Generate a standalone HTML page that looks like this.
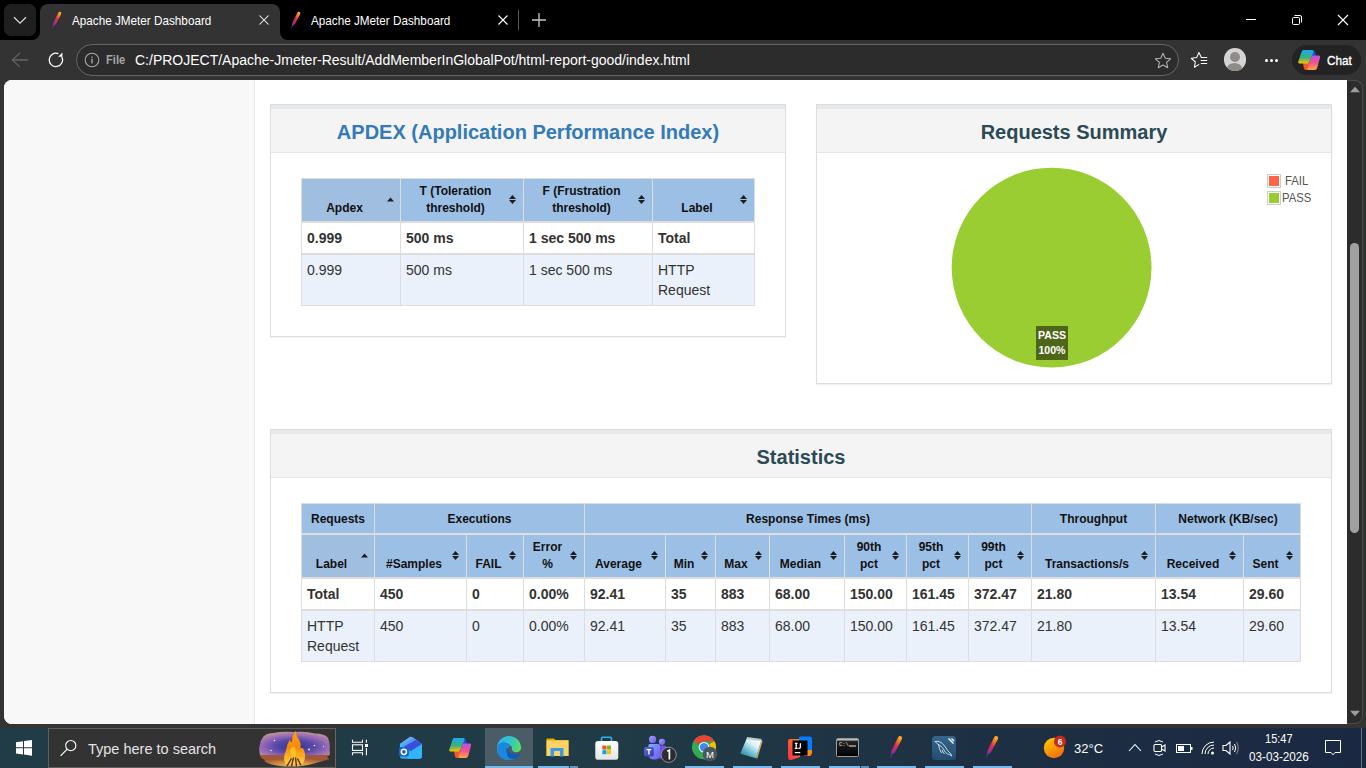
<!DOCTYPE html>
<html><head><meta charset="utf-8"><style>*{margin:0;padding:0;box-sizing:border-box}
html,body{width:1366px;height:768px;overflow:hidden;background:#000;font-family:"Liberation Sans",sans-serif}
.a{position:absolute}
#tabbar{left:0;top:0;width:1366px;height:40px;background:#000}
#toolbar{left:0;top:40px;width:1366px;height:40px;background:#333}
#page{left:4px;top:80px;width:1343px;height:644px;background:#fff;border-radius:8px 0 0 8px}
#taskbar{left:0;top:728px;width:1366px;height:40px;background:linear-gradient(90deg,#213b47 0%,#203a46 45%,#1d2f43 75%,#1b2842 100%)}
.tt{color:#fff;font-size:12px;white-space:nowrap}
.panel{position:absolute;border:1px solid #ddd;background:#fff;box-shadow:0 1px 1px rgba(0,0,0,.05)}
.tbl{position:absolute;background:#ddd}
.c{position:absolute}
.h{background:#9cbfe6}
.hs{background:#a0bedf}
.r1{background:#fff}
.r2{background:#eaf1fa}
.txt{position:absolute;white-space:nowrap}
</style></head><body>
<!-- TAB BAR -->
<div id="tabbar" class="a"></div>
<!-- active tab -->
<div class="a" style="left:40px;top:4px;width:240px;height:40px;background:#333;border-radius:8px 8px 0 0"></div>
<div class="a" style="left:32px;top:32px;width:8px;height:8px;background:#333"></div>
<div class="a" style="left:24px;top:24px;width:16px;height:16px;background:#000;border-radius:0 0 8px 0"></div>
<div class="a" style="left:280px;top:32px;width:8px;height:8px;background:#333"></div>
<div class="a" style="left:280px;top:24px;width:16px;height:16px;background:#000;border-radius:0 0 0 8px"></div>
<svg class="a" style="left:50px;top:11px" width="12" height="18" viewBox="0 0 12 18"><defs><linearGradient id="fg" x1="0.8" y1="0" x2="0.2" y2="1"><stop offset="0" stop-color="#fbb024"/><stop offset="0.2" stop-color="#f47a2a"/><stop offset="0.45" stop-color="#e42a48"/><stop offset="0.72" stop-color="#a62c90"/><stop offset="1" stop-color="#4a3a78"/></linearGradient></defs><path d="M9.3 0.8 Q11.8 0.6 11.2 3 L6.5 12 Q5.5 14 4 14.5 L2.6 17.5 L2.3 17.3 L3 13.5 Q3 12 4 10.5 L8 2.5 Q8.5 1 9.3 0.8Z" fill="url(#fg)"/></svg>
<div class="a" style="left:4px;top:4px;width:32px;height:32px;background:#1f1f1f;border-radius:7px"></div>
<svg class="a" style="left:12px;top:12px" width="16" height="16" viewBox="0 0 16 16"><path d="M2 5.3 L8 11.2 L14 5.3" stroke="#dcdcdc" stroke-width="1.25" fill="none"/></svg>
<div class="a tt" style="left:71.5px;top:13.5px;font-size:12.6px;transform:scaleX(0.93);transform-origin:0 0">Apache JMeter Dashboard</div>
<svg class="a" style="left:259px;top:15px" width="10" height="10" viewBox="0 0 10 10"><path d="M0.5 0.5 L9.5 9.5 M9.5 0.5 L0.5 9.5" stroke="#fff" stroke-width="1.05"/></svg>
<svg class="a" style="left:289px;top:11px" width="12" height="18" viewBox="0 0 12 18"><path d="M9.3 0.8 Q11.8 0.6 11.2 3 L6.5 12 Q5.5 14 4 14.5 L2.6 17.5 L2.3 17.3 L3 13.5 Q3 12 4 10.5 L8 2.5 Q8.5 1 9.3 0.8Z" fill="url(#fg)"/></svg>
<div class="a tt" style="left:310.5px;top:13.5px;font-size:12.6px;transform:scaleX(0.93);transform-origin:0 0">Apache JMeter Dashboard</div>
<svg class="a" style="left:498px;top:15px" width="10" height="10" viewBox="0 0 10 10"><path d="M0.5 0.5 L9.5 9.5 M9.5 0.5 L0.5 9.5" stroke="#fff" stroke-width="1.1"/></svg>
<div class="a" style="left:518px;top:10px;width:1px;height:20px;background:#5a5a5a"></div>
<svg class="a" style="left:531px;top:12px" width="16" height="16" viewBox="0 0 16 16"><path d="M8 1 V15 M1 8 H15" stroke="#c8c8c8" stroke-width="1.3"/></svg>
<!-- window controls -->
<div class="a" style="left:1246px;top:19px;width:10px;height:1px;background:#fff"></div>
<svg class="a" style="left:1291px;top:14px" width="12" height="12" viewBox="0 0 12 12"><rect x="1.5" y="3.5" width="7" height="7" rx="1.2" stroke="#fff" fill="none" stroke-width="1"/><path d="M3.5 1.5 H9 Q10.5 1.5 10.5 3 V8.5" stroke="#fff" fill="none" stroke-width="1"/></svg>
<svg class="a" style="left:1337px;top:14px" width="12" height="12" viewBox="0 0 12 12"><path d="M1 1 L11 11 M11 1 L1 11" stroke="#fff" stroke-width="1.1"/></svg>
<!-- TOOLBAR -->
<div id="toolbar" class="a"></div>
<svg class="a" style="left:11px;top:52px" width="18" height="16" viewBox="0 0 18 16"><path d="M17 7.9 H1.6" stroke="#666" stroke-width="1.5" fill="none"/><path d="M9 1 L1.2 7.9 L9 14.8" stroke="#666" stroke-width="1.1" fill="none"/></svg>
<svg class="a" style="left:47px;top:51px" width="18" height="18" viewBox="0 0 18 18"><path d="M14.87 5.86 A6.7 6.7 0 1 1 11.3 2.65" stroke="#fff" stroke-width="1.3" fill="none"/><path d="M11.2 5.7 L15.4 5.7 L15.4 1.6Z" fill="#fff"/></svg>
<div class="a" style="left:76px;top:44px;width:1103px;height:32px;border:1px solid #676767;border-radius:16px;background:#2c2c2c"></div>
<svg class="a" style="left:84px;top:52px" width="16" height="16" viewBox="0 0 16 16"><circle cx="8" cy="8" r="6.8" stroke="#a8a8a8" stroke-width="1.1" fill="none"/><rect x="7.3" y="6.8" width="1.4" height="4.6" fill="#a8a8a8"/><rect x="7.3" y="4.6" width="1.4" height="1.3" fill="#a8a8a8"/></svg>
<div class="a" style="left:106px;top:52px;color:#a4a4a4;font-size:13px;font-weight:bold;white-space:nowrap;transform:scaleX(0.86);transform-origin:0 0">File</div>
<div class="a" style="left:135px;top:52px;color:#fff;font-size:14px;white-space:nowrap">C:/PROJECT/Apache-Jmeter-Result/AddMemberInGlobalPot/html-report-good/index.html</div>
<svg class="a" style="left:1154px;top:51.5px" width="18" height="18" viewBox="0 0 18 18"><path d="M9 1.3 L11.3 6.2 L16.6 6.8 L12.6 10.4 L13.7 15.7 L9 13 L4.3 15.7 L5.4 10.4 L1.4 6.8 L6.7 6.2 Z" stroke="#b4b4b4" stroke-width="1.05" fill="none" stroke-linejoin="round"/></svg>
<svg class="a" style="left:1190px;top:51px" width="18" height="18" viewBox="0 0 18 18"><path d="M9.2 13.4 L4.3 16.3 L5.4 11 L1.3 7.3 L6.7 6.6 L8.9 1.4 L11.3 6.5 H17.2" stroke="#fff" stroke-width="1.05" fill="none" stroke-linejoin="round"/><path d="M10.8 9.5 H17.2 M10.8 12.5 H17.2" stroke="#fff" stroke-width="1"/></svg>
<div class="a" style="left:1223.6px;top:48.4px;width:22.8px;height:22.8px;border-radius:50%;background:#d6d4d2;overflow:hidden"><div class="a" style="left:6.4px;top:3.6px;width:10px;height:10px;border-radius:50%;background:#8e8b88"></div><div class="a" style="left:3.9px;top:14.7px;width:15px;height:11px;border-radius:50%;background:#8e8b88"></div></div>
<div class="a" style="left:1265px;top:59px;width:3px;height:3px;border-radius:50%;background:#fff"></div>
<div class="a" style="left:1270px;top:59px;width:3px;height:3px;border-radius:50%;background:#fff"></div>
<div class="a" style="left:1275px;top:59px;width:3px;height:3px;border-radius:50%;background:#fff"></div>
<div class="a" style="left:1292px;top:45px;width:69px;height:30px;border-radius:15px;background:#232323"></div>
<svg class="a" style="left:1297px;top:49px" width="25" height="23" viewBox="0 0 25 23"><defs><linearGradient id="cp1" x1="0" y1="0" x2="0" y2="1"><stop offset="0" stop-color="#1aa8f8"/><stop offset="0.55" stop-color="#3cb078"/><stop offset="1" stop-color="#f8c800"/></linearGradient><linearGradient id="cp2" x1="0" y1="0" x2="0" y2="1"><stop offset="0" stop-color="#b850f0"/><stop offset="0.5" stop-color="#f05488"/><stop offset="1" stop-color="#ffa848"/></linearGradient></defs><path d="M13 1 H15.5 Q17.5 1 18.2 3.5 L19 7 H14.5Z" fill="#1a4fd8"/><path d="M6 14 H12 L11.5 21 H9 Q7.3 21 6.8 19Z" fill="#f25a2a"/><path d="M6.5 1 H15 Q17 1 16.5 3 L12.3 13 Q11.6 14.6 9.5 14.6 H3 Q0.8 14.6 1.3 12.5 L4.5 3 Q5 1 6.5 1Z" fill="url(#cp1)"/><path d="M16.3 6.5 H21.5 Q23.6 6.5 23 8.7 L20.2 19 Q19.6 21 17.6 21 H11.8 Q10 21 10.5 19.3 L14 8.5 Q14.6 6.5 16.3 6.5Z" fill="url(#cp2)"/></svg>
<div class="a" style="left:1327px;top:52.5px;color:#fff;font-size:13px;white-space:nowrap;-webkit-text-stroke:0.35px #fff;transform:scaleX(0.9);transform-origin:0 0">Chat</div>

<div class="a" style="left:0;top:80px;width:1366px;height:648px;background:#333"></div>
<div id="page" class="a"></div>
<div class="a" style="left:4px;top:80px;width:250px;height:644px;background:#f8f8f8;border-radius:8px 0 0 8px"></div>
<div class="a" style="left:254px;top:80px;width:1px;height:644px;background:#e7e7e7"></div>
<div class="a" style="left:1347px;top:80px;width:16px;height:644px;background:#2c2c2c;border:1px solid #4a4a4a;border-left:none;border-radius:0 8px 8px 0"></div>
<svg class="a" style="left:1349.5px;top:86px" width="10" height="7" viewBox="0 0 10 7"><path d="M0 6.2 L5 0.8 L10 6.2Z" fill="#9d9d9d"/></svg>
<svg class="a" style="left:1349.5px;top:710px" width="10" height="7" viewBox="0 0 10 7"><path d="M0 0.8 L5 6.2 L10 0.8Z" fill="#9d9d9d"/></svg>
<div class="a" style="left:1350px;top:243px;width:9px;height:290px;border-radius:4.5px;background:#a0a0a0"></div>
<div class="panel" style="left:270px;top:104px;width:516px;height:233px"></div>
<div class="a" style="left:271px;top:105px;width:514px;height:4px;background:#e6e9ec"></div>
<div class="a" style="left:271px;top:109px;width:514px;height:43px;background:#f4f4f4"></div>
<div class="a" style="left:271px;top:152px;width:514px;height:1px;background:#e1e6ec"></div>
<div class="txt" style="left:271px;top:120.57px;font-size:20px;line-height:23px;color:#337ab7;font-weight:bold;width:514px;text-align:center;">APDEX (Application Performance Index)</div>
<div class="panel" style="left:816px;top:104px;width:516px;height:280px"></div>
<div class="a" style="left:817px;top:105px;width:514px;height:4px;background:#e6e9ec"></div>
<div class="a" style="left:817px;top:109px;width:514px;height:43px;background:#f4f4f4"></div>
<div class="a" style="left:817px;top:152px;width:514px;height:1px;background:#e1e6ec"></div>
<div class="txt" style="left:817px;top:120.57px;font-size:20px;line-height:23px;color:#2b4a55;font-weight:bold;width:514px;text-align:center;">Requests Summary</div>
<div class="panel" style="left:270px;top:429px;width:1062px;height:264px"></div>
<div class="a" style="left:271px;top:430px;width:1060px;height:4px;background:#e6e9ec"></div>
<div class="a" style="left:271px;top:434px;width:1060px;height:43px;background:#f4f4f4"></div>
<div class="a" style="left:271px;top:477px;width:1060px;height:1px;background:#e1e6ec"></div>
<div class="txt" style="left:271px;top:445.57px;font-size:20px;line-height:23px;color:#2b4a55;font-weight:bold;width:1060px;text-align:center;">Statistics</div>
<div class="tbl" style="left:301px;top:178px;width:454px;height:128px"></div>
<div class="c h hs" style="left:302px;top:179px;width:98px;height:42px"></div>
<div class="txt" style="left:307px;top:200.84px;font-size:12px;line-height:14px;color:#111;font-weight:bold;width:75px;text-align:center;">Apdex</div>
<svg class="a" style="left:387px;top:197px" width="8" height="5" viewBox="0 0 8 5"><path d="M0 4.5 L3.5 0.5 L7 4.5Z" fill="#1e1e1e"/></svg>
<div class="c h" style="left:401px;top:179px;width:122px;height:42px"></div>
<div class="txt" style="left:406px;top:183.84px;font-size:12px;line-height:14px;color:#111;font-weight:bold;width:99px;text-align:center;">T (Toleration</div>
<div class="txt" style="left:406px;top:200.84px;font-size:12px;line-height:14px;color:#111;font-weight:bold;width:99px;text-align:center;">threshold)</div>
<svg class="a" style="left:509px;top:195px" width="8" height="10" viewBox="0 0 8 10"><path d="M0 4 L3.5 0 L7 4Z M0 5 L7 5 L3.5 9Z" fill="#1e1e1e"/></svg>
<div class="c h" style="left:524px;top:179px;width:128px;height:42px"></div>
<div class="txt" style="left:529px;top:183.84px;font-size:12px;line-height:14px;color:#111;font-weight:bold;width:105px;text-align:center;">F (Frustration</div>
<div class="txt" style="left:529px;top:200.84px;font-size:12px;line-height:14px;color:#111;font-weight:bold;width:105px;text-align:center;">threshold)</div>
<svg class="a" style="left:638px;top:195px" width="8" height="10" viewBox="0 0 8 10"><path d="M0 4 L3.5 0 L7 4Z M0 5 L7 5 L3.5 9Z" fill="#1e1e1e"/></svg>
<div class="c h" style="left:653px;top:179px;width:101px;height:42px"></div>
<div class="txt" style="left:658px;top:200.84px;font-size:12px;line-height:14px;color:#111;font-weight:bold;width:78px;text-align:center;">Label</div>
<svg class="a" style="left:740px;top:195px" width="8" height="10" viewBox="0 0 8 10"><path d="M0 4 L3.5 0 L7 4Z M0 5 L7 5 L3.5 9Z" fill="#1e1e1e"/></svg>
<div class="c r1" style="left:302px;top:223px;width:98px;height:30px"></div>
<div class="txt" style="left:307px;top:230.15px;font-size:14px;line-height:16px;color:#333;font-weight:bold;">0.999</div>
<div class="c r1" style="left:401px;top:223px;width:122px;height:30px"></div>
<div class="txt" style="left:406px;top:230.15px;font-size:14px;line-height:16px;color:#333;font-weight:bold;">500 ms</div>
<div class="c r1" style="left:524px;top:223px;width:128px;height:30px"></div>
<div class="txt" style="left:529px;top:230.15px;font-size:14px;line-height:16px;color:#333;font-weight:bold;">1 sec 500 ms</div>
<div class="c r1" style="left:653px;top:223px;width:101px;height:30px"></div>
<div class="txt" style="left:658px;top:230.15px;font-size:14px;line-height:16px;color:#333;font-weight:bold;">Total</div>
<div class="c r2" style="left:302px;top:255px;width:98px;height:50px"></div>
<div class="txt" style="left:307px;top:262.15px;font-size:14px;line-height:16px;color:#333;">0.999</div>
<div class="c r2" style="left:401px;top:255px;width:122px;height:50px"></div>
<div class="txt" style="left:406px;top:262.15px;font-size:14px;line-height:16px;color:#333;">500 ms</div>
<div class="c r2" style="left:524px;top:255px;width:128px;height:50px"></div>
<div class="txt" style="left:529px;top:262.15px;font-size:14px;line-height:16px;color:#333;">1 sec 500 ms</div>
<div class="c r2" style="left:653px;top:255px;width:101px;height:50px"></div>
<div class="txt" style="left:658px;top:262.15px;font-size:14px;line-height:16px;color:#333;">HTTP</div>
<div class="txt" style="left:658px;top:282.15px;font-size:14px;line-height:16px;color:#333;">Request</div>
<div class="tbl" style="left:301px;top:503px;width:1000px;height:159px"></div>
<div class="c h" style="left:302px;top:504px;width:72px;height:29px"></div>
<div class="txt" style="left:302px;top:511.84px;font-size:12px;line-height:14px;color:#111;font-weight:bold;width:72px;text-align:center;">Requests</div>
<div class="c h" style="left:375px;top:504px;width:209px;height:29px"></div>
<div class="txt" style="left:375px;top:511.84px;font-size:12px;line-height:14px;color:#111;font-weight:bold;width:209px;text-align:center;">Executions</div>
<div class="c h" style="left:585px;top:504px;width:446px;height:29px"></div>
<div class="txt" style="left:585px;top:511.84px;font-size:12px;line-height:14px;color:#111;font-weight:bold;width:446px;text-align:center;">Response Times (ms)</div>
<div class="c h" style="left:1032px;top:504px;width:123px;height:29px"></div>
<div class="txt" style="left:1032px;top:511.84px;font-size:12px;line-height:14px;color:#111;font-weight:bold;width:123px;text-align:center;">Throughput</div>
<div class="c h" style="left:1156px;top:504px;width:144px;height:29px"></div>
<div class="txt" style="left:1156px;top:511.84px;font-size:12px;line-height:14px;color:#111;font-weight:bold;width:144px;text-align:center;">Network (KB/sec)</div>
<div class="c h hs" style="left:302px;top:535px;width:72px;height:42px"></div>
<div class="txt" style="left:307px;top:556.84px;font-size:12px;line-height:14px;color:#111;font-weight:bold;width:49px;text-align:center;">Label</div>
<svg class="a" style="left:361px;top:553px" width="8" height="5" viewBox="0 0 8 5"><path d="M0 4.5 L3.5 0.5 L7 4.5Z" fill="#1e1e1e"/></svg>
<div class="c h" style="left:375px;top:535px;width:91px;height:42px"></div>
<div class="txt" style="left:380px;top:556.84px;font-size:12px;line-height:14px;color:#111;font-weight:bold;width:68px;text-align:center;">#Samples</div>
<svg class="a" style="left:452px;top:551px" width="8" height="10" viewBox="0 0 8 10"><path d="M0 4 L3.5 0 L7 4Z M0 5 L7 5 L3.5 9Z" fill="#1e1e1e"/></svg>
<div class="c h" style="left:467px;top:535px;width:56px;height:42px"></div>
<div class="txt" style="left:472px;top:556.84px;font-size:12px;line-height:14px;color:#111;font-weight:bold;width:33px;text-align:center;">FAIL</div>
<svg class="a" style="left:509px;top:551px" width="8" height="10" viewBox="0 0 8 10"><path d="M0 4 L3.5 0 L7 4Z M0 5 L7 5 L3.5 9Z" fill="#1e1e1e"/></svg>
<div class="c h" style="left:524px;top:535px;width:60px;height:42px"></div>
<div class="txt" style="left:529px;top:539.84px;font-size:12px;line-height:14px;color:#111;font-weight:bold;width:37px;text-align:center;">Error</div>
<div class="txt" style="left:529px;top:556.84px;font-size:12px;line-height:14px;color:#111;font-weight:bold;width:37px;text-align:center;">%</div>
<svg class="a" style="left:570px;top:551px" width="8" height="10" viewBox="0 0 8 10"><path d="M0 4 L3.5 0 L7 4Z M0 5 L7 5 L3.5 9Z" fill="#1e1e1e"/></svg>
<div class="c h" style="left:585px;top:535px;width:80px;height:42px"></div>
<div class="txt" style="left:590px;top:556.84px;font-size:12px;line-height:14px;color:#111;font-weight:bold;width:57px;text-align:center;">Average</div>
<svg class="a" style="left:651px;top:551px" width="8" height="10" viewBox="0 0 8 10"><path d="M0 4 L3.5 0 L7 4Z M0 5 L7 5 L3.5 9Z" fill="#1e1e1e"/></svg>
<div class="c h" style="left:666px;top:535px;width:49px;height:42px"></div>
<div class="txt" style="left:671px;top:556.84px;font-size:12px;line-height:14px;color:#111;font-weight:bold;width:26px;text-align:center;">Min</div>
<svg class="a" style="left:701px;top:551px" width="8" height="10" viewBox="0 0 8 10"><path d="M0 4 L3.5 0 L7 4Z M0 5 L7 5 L3.5 9Z" fill="#1e1e1e"/></svg>
<div class="c h" style="left:716px;top:535px;width:53px;height:42px"></div>
<div class="txt" style="left:721px;top:556.84px;font-size:12px;line-height:14px;color:#111;font-weight:bold;width:30px;text-align:center;">Max</div>
<svg class="a" style="left:755px;top:551px" width="8" height="10" viewBox="0 0 8 10"><path d="M0 4 L3.5 0 L7 4Z M0 5 L7 5 L3.5 9Z" fill="#1e1e1e"/></svg>
<div class="c h" style="left:770px;top:535px;width:74px;height:42px"></div>
<div class="txt" style="left:775px;top:556.84px;font-size:12px;line-height:14px;color:#111;font-weight:bold;width:51px;text-align:center;">Median</div>
<svg class="a" style="left:830px;top:551px" width="8" height="10" viewBox="0 0 8 10"><path d="M0 4 L3.5 0 L7 4Z M0 5 L7 5 L3.5 9Z" fill="#1e1e1e"/></svg>
<div class="c h" style="left:845px;top:535px;width:61px;height:42px"></div>
<div class="txt" style="left:850px;top:539.84px;font-size:12px;line-height:14px;color:#111;font-weight:bold;width:38px;text-align:center;">90th</div>
<div class="txt" style="left:850px;top:556.84px;font-size:12px;line-height:14px;color:#111;font-weight:bold;width:38px;text-align:center;">pct</div>
<svg class="a" style="left:892px;top:551px" width="8" height="10" viewBox="0 0 8 10"><path d="M0 4 L3.5 0 L7 4Z M0 5 L7 5 L3.5 9Z" fill="#1e1e1e"/></svg>
<div class="c h" style="left:907px;top:535px;width:61px;height:42px"></div>
<div class="txt" style="left:912px;top:539.84px;font-size:12px;line-height:14px;color:#111;font-weight:bold;width:38px;text-align:center;">95th</div>
<div class="txt" style="left:912px;top:556.84px;font-size:12px;line-height:14px;color:#111;font-weight:bold;width:38px;text-align:center;">pct</div>
<svg class="a" style="left:954px;top:551px" width="8" height="10" viewBox="0 0 8 10"><path d="M0 4 L3.5 0 L7 4Z M0 5 L7 5 L3.5 9Z" fill="#1e1e1e"/></svg>
<div class="c h" style="left:969px;top:535px;width:62px;height:42px"></div>
<div class="txt" style="left:974px;top:539.84px;font-size:12px;line-height:14px;color:#111;font-weight:bold;width:39px;text-align:center;">99th</div>
<div class="txt" style="left:974px;top:556.84px;font-size:12px;line-height:14px;color:#111;font-weight:bold;width:39px;text-align:center;">pct</div>
<svg class="a" style="left:1017px;top:551px" width="8" height="10" viewBox="0 0 8 10"><path d="M0 4 L3.5 0 L7 4Z M0 5 L7 5 L3.5 9Z" fill="#1e1e1e"/></svg>
<div class="c h" style="left:1032px;top:535px;width:123px;height:42px"></div>
<div class="txt" style="left:1037px;top:556.84px;font-size:12px;line-height:14px;color:#111;font-weight:bold;width:100px;text-align:center;">Transactions/s</div>
<svg class="a" style="left:1141px;top:551px" width="8" height="10" viewBox="0 0 8 10"><path d="M0 4 L3.5 0 L7 4Z M0 5 L7 5 L3.5 9Z" fill="#1e1e1e"/></svg>
<div class="c h" style="left:1156px;top:535px;width:87px;height:42px"></div>
<div class="txt" style="left:1161px;top:556.84px;font-size:12px;line-height:14px;color:#111;font-weight:bold;width:64px;text-align:center;">Received</div>
<svg class="a" style="left:1229px;top:551px" width="8" height="10" viewBox="0 0 8 10"><path d="M0 4 L3.5 0 L7 4Z M0 5 L7 5 L3.5 9Z" fill="#1e1e1e"/></svg>
<div class="c h" style="left:1244px;top:535px;width:56px;height:42px"></div>
<div class="txt" style="left:1249px;top:556.84px;font-size:12px;line-height:14px;color:#111;font-weight:bold;width:33px;text-align:center;">Sent</div>
<svg class="a" style="left:1286px;top:551px" width="8" height="10" viewBox="0 0 8 10"><path d="M0 4 L3.5 0 L7 4Z M0 5 L7 5 L3.5 9Z" fill="#1e1e1e"/></svg>
<div class="c r1" style="left:302px;top:579px;width:72px;height:30px"></div>
<div class="txt" style="left:307px;top:586.15px;font-size:14px;line-height:16px;color:#333;font-weight:bold;">Total</div>
<div class="c r1" style="left:375px;top:579px;width:91px;height:30px"></div>
<div class="txt" style="left:380px;top:586.15px;font-size:14px;line-height:16px;color:#333;font-weight:bold;">450</div>
<div class="c r1" style="left:467px;top:579px;width:56px;height:30px"></div>
<div class="txt" style="left:472px;top:586.15px;font-size:14px;line-height:16px;color:#333;font-weight:bold;">0</div>
<div class="c r1" style="left:524px;top:579px;width:60px;height:30px"></div>
<div class="txt" style="left:529px;top:586.15px;font-size:14px;line-height:16px;color:#333;font-weight:bold;">0.00%</div>
<div class="c r1" style="left:585px;top:579px;width:80px;height:30px"></div>
<div class="txt" style="left:590px;top:586.15px;font-size:14px;line-height:16px;color:#333;font-weight:bold;">92.41</div>
<div class="c r1" style="left:666px;top:579px;width:49px;height:30px"></div>
<div class="txt" style="left:671px;top:586.15px;font-size:14px;line-height:16px;color:#333;font-weight:bold;">35</div>
<div class="c r1" style="left:716px;top:579px;width:53px;height:30px"></div>
<div class="txt" style="left:721px;top:586.15px;font-size:14px;line-height:16px;color:#333;font-weight:bold;">883</div>
<div class="c r1" style="left:770px;top:579px;width:74px;height:30px"></div>
<div class="txt" style="left:775px;top:586.15px;font-size:14px;line-height:16px;color:#333;font-weight:bold;">68.00</div>
<div class="c r1" style="left:845px;top:579px;width:61px;height:30px"></div>
<div class="txt" style="left:850px;top:586.15px;font-size:14px;line-height:16px;color:#333;font-weight:bold;">150.00</div>
<div class="c r1" style="left:907px;top:579px;width:61px;height:30px"></div>
<div class="txt" style="left:912px;top:586.15px;font-size:14px;line-height:16px;color:#333;font-weight:bold;">161.45</div>
<div class="c r1" style="left:969px;top:579px;width:62px;height:30px"></div>
<div class="txt" style="left:974px;top:586.15px;font-size:14px;line-height:16px;color:#333;font-weight:bold;">372.47</div>
<div class="c r1" style="left:1032px;top:579px;width:123px;height:30px"></div>
<div class="txt" style="left:1037px;top:586.15px;font-size:14px;line-height:16px;color:#333;font-weight:bold;">21.80</div>
<div class="c r1" style="left:1156px;top:579px;width:87px;height:30px"></div>
<div class="txt" style="left:1161px;top:586.15px;font-size:14px;line-height:16px;color:#333;font-weight:bold;">13.54</div>
<div class="c r1" style="left:1244px;top:579px;width:56px;height:30px"></div>
<div class="txt" style="left:1249px;top:586.15px;font-size:14px;line-height:16px;color:#333;font-weight:bold;">29.60</div>
<div class="c r2" style="left:302px;top:611px;width:72px;height:50px"></div>
<div class="txt" style="left:307px;top:618.15px;font-size:14px;line-height:16px;color:#333;">HTTP</div>
<div class="txt" style="left:307px;top:638.15px;font-size:14px;line-height:16px;color:#333;">Request</div>
<div class="c r2" style="left:375px;top:611px;width:91px;height:50px"></div>
<div class="txt" style="left:380px;top:618.15px;font-size:14px;line-height:16px;color:#333;">450</div>
<div class="c r2" style="left:467px;top:611px;width:56px;height:50px"></div>
<div class="txt" style="left:472px;top:618.15px;font-size:14px;line-height:16px;color:#333;">0</div>
<div class="c r2" style="left:524px;top:611px;width:60px;height:50px"></div>
<div class="txt" style="left:529px;top:618.15px;font-size:14px;line-height:16px;color:#333;">0.00%</div>
<div class="c r2" style="left:585px;top:611px;width:80px;height:50px"></div>
<div class="txt" style="left:590px;top:618.15px;font-size:14px;line-height:16px;color:#333;">92.41</div>
<div class="c r2" style="left:666px;top:611px;width:49px;height:50px"></div>
<div class="txt" style="left:671px;top:618.15px;font-size:14px;line-height:16px;color:#333;">35</div>
<div class="c r2" style="left:716px;top:611px;width:53px;height:50px"></div>
<div class="txt" style="left:721px;top:618.15px;font-size:14px;line-height:16px;color:#333;">883</div>
<div class="c r2" style="left:770px;top:611px;width:74px;height:50px"></div>
<div class="txt" style="left:775px;top:618.15px;font-size:14px;line-height:16px;color:#333;">68.00</div>
<div class="c r2" style="left:845px;top:611px;width:61px;height:50px"></div>
<div class="txt" style="left:850px;top:618.15px;font-size:14px;line-height:16px;color:#333;">150.00</div>
<div class="c r2" style="left:907px;top:611px;width:61px;height:50px"></div>
<div class="txt" style="left:912px;top:618.15px;font-size:14px;line-height:16px;color:#333;">161.45</div>
<div class="c r2" style="left:969px;top:611px;width:62px;height:50px"></div>
<div class="txt" style="left:974px;top:618.15px;font-size:14px;line-height:16px;color:#333;">372.47</div>
<div class="c r2" style="left:1032px;top:611px;width:123px;height:50px"></div>
<div class="txt" style="left:1037px;top:618.15px;font-size:14px;line-height:16px;color:#333;">21.80</div>
<div class="c r2" style="left:1156px;top:611px;width:87px;height:50px"></div>
<div class="txt" style="left:1161px;top:618.15px;font-size:14px;line-height:16px;color:#333;">13.54</div>
<div class="c r2" style="left:1244px;top:611px;width:56px;height:50px"></div>
<div class="txt" style="left:1249px;top:618.15px;font-size:14px;line-height:16px;color:#333;">29.60</div>
<svg class="a" style="left:940px;top:155px" width="230" height="225" viewBox="940 155 230 225"><circle cx="1051.6" cy="267.6" r="99.9" fill="#9acd32"/></svg>
<div class="a" style="left:1036px;top:326px;width:32px;height:34px;background:#4d6619"></div>
<div class="txt" style="left:1036px;top:329.33px;font-size:10.6px;line-height:12px;color:#fff;font-weight:bold;width:32px;text-align:center;">PASS</div>
<div class="txt" style="left:1036px;top:344.33px;font-size:10.6px;line-height:12px;color:#fff;font-weight:bold;width:32px;text-align:center;">100%</div>
<div class="a" style="left:1267px;top:174px;width:14px;height:14px;border:1px solid #ccc;padding:1px;background:#fff"><div style="width:10px;height:10px;background:#ff6347"></div></div>
<div class="a" style="left:1267px;top:191px;width:14px;height:14px;border:1px solid #ccc;padding:1px;background:#fff"><div style="width:10px;height:10px;background:#9acd32"></div></div>
<div class="txt" style="left:1284.5px;top:173.84px;font-size:12px;line-height:14px;color:#545454;transform:scaleX(0.94);transform-origin:0 0;">FAIL</div>
<div class="txt" style="left:1281.5px;top:190.84px;font-size:12px;line-height:14px;color:#545454;transform:scaleX(0.94);transform-origin:0 0;">PASS</div>
<div id="taskbar" class="a"></div>
<svg class="a" style="left:15px;top:739px" width="18" height="18" viewBox="0 0 18 18"><path d="M1 3.2 L8 2.2 V8.3 H1Z M9 2.05 L17 0.9 V8.3 H9Z M1 9.3 H8 V15.4 L1 14.4Z M9 9.3 H17 V16.7 L9 15.55Z" fill="#fff"/></svg>
<div class="a" style="left:48px;top:728px;width:288px;height:40px;background:#333;border:1px solid #5f5f5f;border-right-color:#666"></div>
<svg class="a" style="left:59px;top:739px" width="19" height="19" viewBox="0 0 19 19"><circle cx="11.8" cy="6.6" r="5.1" stroke="#fff" stroke-width="1.1" fill="none"/><path d="M8.2 10.2 L1.6 16.8" stroke="#fff" stroke-width="1.2"/></svg>
<div class="a" style="left:88px;top:741px;color:#e4e4e4;font-size:14.5px;white-space:nowrap">Type here to search</div>
<svg class="a" style="left:259px;top:730px" width="73" height="37" viewBox="0 0 73 37"><defs><radialGradient id="sky" cx="0.5" cy="0.62" r="0.62"><stop offset="0" stop-color="#2e3590"/><stop offset="0.45" stop-color="#5a4aa8"/><stop offset="0.8" stop-color="#a070b8"/><stop offset="1" stop-color="#b89488"/></radialGradient><radialGradient id="gnd" cx="0.5" cy="0.9" r="0.6"><stop offset="0" stop-color="#f0c050"/><stop offset="0.6" stop-color="#c88040"/><stop offset="1" stop-color="#a05838"/></radialGradient><linearGradient id="fire" x1="0" y1="0" x2="0" y2="1"><stop offset="0" stop-color="#ffa010"/><stop offset="0.5" stop-color="#f88a08"/><stop offset="1" stop-color="#ffd040"/></linearGradient></defs><path d="M3 9 Q5 3.5 14 3 Q24 1 35 2 Q48 1 56 3.5 Q66 3.5 69 8 Q71.5 14 70.5 20 Q71.5 24 70 25.5 H1 Q-0.5 19 1 14.5 Q1 11 3 9Z" fill="url(#sky)"/><path d="M1 25 H70.5 Q66 27 70.5 29 Q62 31.5 55 33.5 Q45 36 38 36.5 H25 Q15 35.5 10 33.5 Q4 31.5 6 30 Q1 28 1 25Z" fill="url(#gnd)"/><path d="M26.5 34 Q23.5 28 26.5 22 Q27.5 15 31 9 Q31 13.5 33 11.5 Q33 5 37 0.8 Q37 6 40 9.5 Q42.5 14 41.5 18.5 Q44.5 16.5 45.5 22 Q47.5 28 43.5 34Z" fill="url(#fire)"/><path d="M31 20 Q34 14 36 18 Q38 24 36 30 Q32 30 31 20Z" fill="#ffc830" opacity="0.8"/><path d="M28 36 L32.5 28.5 M32.5 36.5 L34.5 27.5 M37.5 36.5 L36.5 27.5 M42 35.5 L38.5 28.5" stroke="#5a3014" stroke-width="1.4"/><circle cx="15.5" cy="10.5" r="0.8" fill="#eee"/><circle cx="12" cy="20.5" r="0.8" fill="#eee"/><circle cx="50" cy="19.5" r="1" fill="#eee"/><circle cx="55.5" cy="15.5" r="0.8" fill="#eee"/><circle cx="64.5" cy="16.5" r="0.7" fill="#ccc"/></svg>
<!-- task view -->
<svg class="a" style="left:345px;top:733px" width="30" height="30" viewBox="0 0 30 30"><path d="M7.5 6.8 V9.3 H17.5 V6.8 M7.5 22.2 V19.7 H17.5 V22.2" stroke="#fff" stroke-width="1.1" fill="none"/><rect x="7.5" y="11.8" width="10" height="5.6" stroke="#fff" stroke-width="1.1" fill="none"/><path d="M21.4 6.8 V9.8 M21.4 15 V22.2" stroke="#fff" stroke-width="1.1"/><rect x="20" y="11" width="3" height="3" fill="#fff"/></svg>
<!-- outlook -->
<svg class="a" style="left:398px;top:736px" width="26" height="24" viewBox="0 0 26 24"><defs><linearGradient id="olr" x1="0" y1="0" x2="1" y2="1"><stop offset="0" stop-color="#8ad8ff"/><stop offset="0.5" stop-color="#4a8af0"/><stop offset="1" stop-color="#3a3fd0"/></linearGradient><linearGradient id="olb" x1="0" y1="0" x2="1" y2="1"><stop offset="0" stop-color="#30d0ff"/><stop offset="1" stop-color="#2a90f0"/></linearGradient></defs><path d="M2 8 L11.5 1.2 Q13 0.3 14.5 1.2 L24 8 V20 Q24 22.8 21.5 22.8 H4.5 Q2 22.8 2 20Z" fill="url(#olb)"/><path d="M2 8 L11.5 1.2 Q13 0.3 14.5 1.2 L24 8 L13 15Z" fill="url(#olr)"/><path d="M6 10.5 L18 4 L24 8 L13 15Z" fill="#3848d8" opacity="0.85"/><path d="M13 15 L24 8 V20 Q24 22.8 21.5 22.8 H9Z" fill="#32b8ff" opacity="0.9"/><rect x="1" y="11" width="9.8" height="9.6" rx="2" fill="#1660d0"/><circle cx="5.9" cy="15.8" r="2.6" stroke="#fff" stroke-width="1.5" fill="none"/></svg>
<!-- copilot -->
<svg class="a" style="left:448px;top:737px" width="25" height="23" viewBox="0 0 25 23"><path d="M13 1 H15.5 Q17.5 1 18.2 3.5 L19 7 H14.5Z" fill="#1a4fd8"/><path d="M6 14 H12 L11.5 21 H9 Q7.3 21 6.8 19Z" fill="#f25a2a"/><path d="M6.5 1 H15 Q17 1 16.5 3 L12.3 13 Q11.6 14.6 9.5 14.6 H3 Q0.8 14.6 1.3 12.5 L4.5 3 Q5 1 6.5 1Z" fill="url(#cp1)"/><path d="M16.3 6.5 H21.5 Q23.6 6.5 23 8.7 L20.2 19 Q19.6 21 17.6 21 H11.8 Q10 21 10.5 19.3 L14 8.5 Q14.6 6.5 16.3 6.5Z" fill="url(#cp2)"/></svg>
<!-- edge active -->
<div class="a" style="left:485px;top:728px;width:48px;height:38px;background:#4a5d66"></div>
<div class="a" style="left:485px;top:766px;width:48px;height:2px;background:#76b9ed"></div>
<svg class="a" style="left:497px;top:735.6px" width="25" height="25" viewBox="0 0 25 25"><defs><linearGradient id="e1" x1="0" y1="0.2" x2="1" y2="0.6"><stop offset="0" stop-color="#2ab4f2"/><stop offset="0.55" stop-color="#34c8c0"/><stop offset="1" stop-color="#66e250"/></linearGradient></defs><circle cx="12" cy="12" r="12" fill="url(#e1)"/><path d="M10.5 13 Q11 9.5 13.5 9.8 Q15.5 10.5 14.8 13.5 Q15.5 16 18.5 16.3 Q22.5 16.5 24.2 13 V25 H10Z" fill="#4a5d66"/><path d="M0.3 13 Q0 7 6 6.2 Q11.5 5.6 13.8 9.9 Q10.5 9.3 9.3 12.5 Q8.3 17 10.8 20.5 Q13.5 23.8 18 23 Q21 22.2 23 19.6 Q20 24 12.5 24 Q0.8 24 0.3 13Z" fill="#1a88e0"/><path d="M9.6 11.5 Q8.2 16.5 10.8 20.2 Q13.6 23.6 18.2 22.6 Q21.6 21.6 23.2 18.8 Q22.4 17.6 19.8 18 Q15 18.4 12.6 16.4 Q10.6 14.6 11 12.2Z" fill="#0f5cb8"/></svg>
<!-- explorer -->
<div class="a" style="left:538px;top:766px;width:31px;height:2px;background:#76b9ed"></div>
<div class="a" style="left:570px;top:766px;width:8px;height:2px;background:#5f96c0"></div>
<svg class="a" style="left:546px;top:738px" width="23" height="20" viewBox="0 0 23 20"><path d="M0.5 0.5 H8 L9.5 2 H22.5 V18 H0.5Z" fill="#e8a800"/><rect x="0.5" y="2.5" width="22" height="15.5" fill="#fcd466"/><path d="M4.5 18.5 V10 H17.5 V18.5 H14 V13 H8 V18.5Z" fill="#3a9be8"/></svg>
<!-- store -->
<svg class="a" style="left:595px;top:736px" width="24" height="24" viewBox="0 0 24 24"><defs><linearGradient id="st" x1="0" y1="0" x2="0" y2="1"><stop offset="0" stop-color="#ffffff"/><stop offset="1" stop-color="#e4e4e4"/></linearGradient></defs><path d="M6.5 6 V2.5 Q6.5 1.2 7.8 1.2 H15.2 Q16.5 1.2 16.5 2.5 V6" stroke="#28b4ee" stroke-width="1.6" fill="none"/><rect x="0.3" y="5" width="23" height="18.7" rx="2.8" fill="url(#st)"/><rect x="7.4" y="9.6" width="4" height="4" fill="#f25022"/><rect x="12" y="9.6" width="4" height="4" fill="#7fba00"/><rect x="7.4" y="14.2" width="4" height="4" fill="#00a4ef"/><rect x="12" y="14.2" width="4" height="4" fill="#ffb900"/></svg>
<!-- teams -->
<svg class="a" style="left:643px;top:735px" width="35" height="30" viewBox="0 0 35 30"><defs><linearGradient id="tm1" x1="0" y1="0" x2="1" y2="1"><stop offset="0" stop-color="#a89cff"/><stop offset="1" stop-color="#6a5ee8"/></linearGradient><linearGradient id="tm2" x1="0" y1="0" x2="1" y2="1"><stop offset="0" stop-color="#7fb0ff"/><stop offset="1" stop-color="#7058f0"/></linearGradient><linearGradient id="tm3" x1="0" y1="0" x2="1" y2="1"><stop offset="0" stop-color="#5a6ee8"/><stop offset="1" stop-color="#3a30b0"/></linearGradient></defs><circle cx="9.6" cy="4.4" r="3.6" fill="url(#tm1)"/><circle cx="19" cy="6.8" r="3.1" fill="url(#tm1)"/><path d="M15 10.5 H21.5 Q23.5 10.5 23.5 12.5 V19 Q23.5 23.5 19 23.5 H15Z" fill="#7050e8"/><path d="M5.5 10 Q5.5 9 7 9 H15.5 Q17 9 17 10.5 V19 Q17 24.5 11.5 24.5 Q5.5 24.5 5.5 19Z" fill="url(#tm2)"/><rect x="1.1" y="12" width="9.7" height="9.6" rx="2" fill="url(#tm3)"/><path d="M3.6 14.6 H8.3 M5.95 14.6 V19.4" stroke="#fff" stroke-width="1.4"/><circle cx="25.7" cy="19.8" r="7.6" fill="#2a2a2e" fill-opacity="0.92" stroke="#a8a8a8" stroke-width="0.8"/><path d="M24.2 16.3 L26.4 15.1 V24.6" stroke="#fff" stroke-width="1.7" fill="none"/></svg>
<!-- chrome -->
<div class="a" style="left:685px;top:766px;width:39px;height:2px;background:#76b9ed"></div>
<svg class="a" style="left:692px;top:735px" width="28" height="28" viewBox="0 0 28 28"><circle cx="12" cy="12.3" r="12" fill="#34a853"/><path d="M12 0.3 A12 12 0 0 1 22.4 6.3 L12 6.3 A6 6 0 0 0 6.8 9.3 L1.6 6.3 A12 12 0 0 1 12 0.3Z" fill="#ea4335"/><path d="M22.4 6.3 A12 12 0 0 1 12 24.3 L17.2 15.3 A6 6 0 0 0 17.2 9.3Z" fill="#fbbc04"/><circle cx="12" cy="12.3" r="5.3" fill="#fff"/><circle cx="12" cy="12.3" r="4.2" fill="#4285f4"/><circle cx="18" cy="19" r="7.3" fill="#49575e"/><text x="18" y="22.7" font-family="Liberation Sans" font-size="9.5" fill="#fff" text-anchor="middle">M</text></svg>
<!-- notepad -->
<div class="a" style="left:733px;top:766px;width:39px;height:2px;background:#76b9ed"></div>
<svg class="a" style="left:739px;top:736px" width="25" height="24" viewBox="0 0 25 24"><defs><linearGradient id="np" x1="0.2" y1="0.9" x2="0.8" y2="0.1"><stop offset="0" stop-color="#2f8aa6"/><stop offset="0.45" stop-color="#8fd0df"/><stop offset="0.7" stop-color="#d8f0f5"/><stop offset="1" stop-color="#f4fbfc"/></linearGradient></defs><path d="M22.3 4 L23.6 5 L18.3 22.6 L17 22.3Z" fill="#d8b060"/><path d="M7.8 2.2 L22.3 4.2 L17 22.3 L1.2 17.7Z" fill="url(#np)"/><path d="M7.8 2.2 L22.3 4.2" stroke="#c8d0d4" stroke-width="2.2"/><path d="M9 2.3 L9 1 M12 2.7 V1.4 M15 3.1 V1.8 M18 3.5 V2.2 M21 3.9 V2.6" stroke="#9aa4a8" stroke-width="0.7"/></svg>
<!-- intellij -->
<div class="a" style="left:781px;top:766px;width:39px;height:2px;background:#76b9ed"></div>
<svg class="a" style="left:787px;top:735.5px" width="26" height="25" viewBox="0 0 26 25"><defs><linearGradient id="ij1" x1="0" y1="1" x2="1" y2="0"><stop offset="0" stop-color="#fe2857"/><stop offset="0.5" stop-color="#fe5a30"/><stop offset="1" stop-color="#ff8a10"/></linearGradient></defs><path d="M1 5 Q1 3 3 3 H13 V21 L4 24 Q1 24.5 1 21.5Z" fill="url(#ij1)"/><path d="M12 2 Q12 0.5 13.5 0.5 H23 Q25 0.5 25 2.5 V15 Q25 17 23 17 H12Z" fill="#087cfa"/><path d="M17 14 H25 V16 Q25 20 22 20 H17Z" fill="#ff8a10"/><rect x="5.5" y="4.5" width="15" height="15" fill="#000"/><path d="M7.8 7.3 H10.6 M9.2 7.3 V12.3 M7.8 12.3 H10.6 M13.4 7.3 V11.3 Q13.4 12.4 12.2 12.4 H11.3" stroke="#fff" stroke-width="1.3" fill="none"/><rect x="7.8" y="16" width="5.5" height="1.2" fill="#fff"/></svg>
<!-- cmd -->
<div class="a" style="left:829px;top:766px;width:31px;height:2px;background:#76b9ed"></div>
<div class="a" style="left:861px;top:766px;width:8px;height:2px;background:#5f96c0"></div>
<svg class="a" style="left:836px;top:738px" width="23" height="19" viewBox="0 0 23 19"><defs><linearGradient id="cm" x1="0" y1="0" x2="0" y2="1"><stop offset="0" stop-color="#2a2a2a"/><stop offset="1" stop-color="#000"/></linearGradient></defs><rect x="0.5" y="0.5" width="22" height="18" rx="1" fill="url(#cm)" stroke="#9a9a9a" stroke-width="1"/><rect x="1" y="1" width="21" height="1.6" fill="#b8b8b8"/><text x="3" y="8.2" font-family="Liberation Mono" font-size="5.5" fill="#e8e8e8">C:\</text><path d="M13 8 H20" stroke="#e8e8e8" stroke-width="1"/></svg>
<!-- feather 1 -->
<div class="a" style="left:877px;top:766px;width:39px;height:2px;background:#76b9ed"></div>
<svg class="a" style="left:886.7px;top:734.8px" width="16" height="24" viewBox="0 0 12 18"><path d="M9.3 0.8 Q11.8 0.6 11.2 3 L6.5 12 Q5.5 14 4 14.5 L2.6 17.5 L2.3 17.3 L3 13.5 Q3 12 4 10.5 L8 2.5 Q8.5 1 9.3 0.8Z" fill="url(#fg)"/></svg>
<!-- mysql -->
<div class="a" style="left:925px;top:766px;width:39px;height:2px;background:#76b9ed"></div>
<svg class="a" style="left:932px;top:736px" width="24" height="24" viewBox="0 0 24 24"><defs><linearGradient id="my" x1="0" y1="0" x2="0" y2="1"><stop offset="0" stop-color="#34658e"/><stop offset="1" stop-color="#244e72"/></linearGradient></defs><rect x="0" y="0" width="24" height="24" rx="3.5" fill="url(#my)"/><path d="M3 5.5 Q6 4.5 9 6.5 Q12 8.5 14 12 Q15.5 15 18 17 Q19.5 18.3 19.8 20 Q17.5 18.5 15.5 17.8 Q13 16.5 12 14 Q10.5 11 8 9.5 Q5 8 3 5.5Z M6.5 8.5 Q7 13 9.5 17 M10 14 Q10.5 16 12.5 18" stroke="#dce8f2" stroke-width="0.9" fill="none"/><path d="M16.5 2.5 L21.5 7.5 M19.5 2.5 L22 5" stroke="#fff" stroke-width="1.4"/></svg>
<!-- feather 2 -->
<div class="a" style="left:973px;top:766px;width:39px;height:2px;background:#76b9ed"></div>
<svg class="a" style="left:982.7px;top:734.8px" width="16" height="24" viewBox="0 0 12 18"><path d="M9.3 0.8 Q11.8 0.6 11.2 3 L6.5 12 Q5.5 14 4 14.5 L2.6 17.5 L2.3 17.3 L3 13.5 Q3 12 4 10.5 L8 2.5 Q8.5 1 9.3 0.8Z" fill="url(#fg)"/></svg>
<!-- weather -->
<svg class="a" style="left:1043px;top:735px" width="26" height="25" viewBox="0 0 26 25"><defs><linearGradient id="sun" x1="0" y1="0" x2="0.6" y2="1"><stop offset="0" stop-color="#ffd200"/><stop offset="1" stop-color="#f07010"/></linearGradient></defs><circle cx="11" cy="13" r="10.2" fill="url(#sun)"/><circle cx="17" cy="6.6" r="6" fill="#c42b1c"/><text x="17" y="9.9" font-family="Liberation Sans" font-size="8.5" font-weight="bold" fill="#fff" text-anchor="middle">6</text></svg>
<div class="a" style="left:1074px;top:741px;color:#fff;font-size:13px;white-space:nowrap">32°C</div>
<svg class="a" style="left:1128px;top:743px" width="14" height="9" viewBox="0 0 14 9"><path d="M1 8 L7 1.5 L13 8" stroke="#fff" stroke-width="1.1" fill="none"/></svg>
<svg class="a" style="left:1153px;top:739px" width="13" height="18" viewBox="0 0 13 18"><path d="M2 3 Q6 0 10 3 M2 15 Q6 18 10 15" stroke="#fff" stroke-width="1" fill="none"/><rect x="1" y="5.5" width="7.5" height="7" rx="1" stroke="#fff" stroke-width="1.1" fill="none"/><path d="M8.5 8 L12 6 V12 L8.5 10" stroke="#fff" stroke-width="1.1" fill="none"/></svg>
<svg class="a" style="left:1175px;top:743px" width="18" height="11" viewBox="0 0 18 11"><rect x="1.5" y="1.5" width="14" height="8" stroke="#fff" stroke-width="1" fill="none"/><rect x="3" y="3" width="6" height="5" fill="#fff"/><rect x="16" y="4" width="1.5" height="3" fill="#fff"/></svg>
<svg class="a" style="left:1201px;top:741px" width="15" height="15" viewBox="0 0 15 15"><path d="M1 13 A12 12 0 0 1 13 1 M4 13 A9 9 0 0 1 13 4 M7 13 A6 6 0 0 1 13 7" stroke="#fff" stroke-width="1" fill="none"/><circle cx="11.5" cy="12" r="1.5" fill="#fff"/></svg>
<svg class="a" style="left:1222px;top:740px" width="18" height="16" viewBox="0 0 18 16"><path d="M1 5.5 H4 L8 2 V14 L4 10.5 H1Z" stroke="#fff" stroke-width="1.1" fill="none"/><path d="M10.5 6 Q12 8 10.5 10 M12.5 4 Q15 8 12.5 12" stroke="#fff" stroke-width="1" fill="none"/><path d="M14.5 2 Q18 8 14.5 14" stroke="#888" stroke-width="1" fill="none"/></svg>
<div class="a" style="left:1264.5px;top:731.5px;color:#fff;font-size:12.4px;white-space:nowrap;transform:scaleX(0.89);transform-origin:0 0">15:47</div>
<div class="a" style="left:1248.5px;top:750px;color:#fff;font-size:12.2px;white-space:nowrap;transform:scaleX(0.96);transform-origin:0 0">03-03-2026</div>
<svg class="a" style="left:1324px;top:739px" width="18" height="18" viewBox="0 0 18 18"><path d="M1.5 1.5 H16.5 V13.5 H11 L9 15.8 L7 13.5 H1.5Z" stroke="#fff" stroke-width="1" fill="none"/></svg>
<div class="a" style="left:1361px;top:728px;width:1px;height:40px;background:#6a6f78"></div>

</body></html>
